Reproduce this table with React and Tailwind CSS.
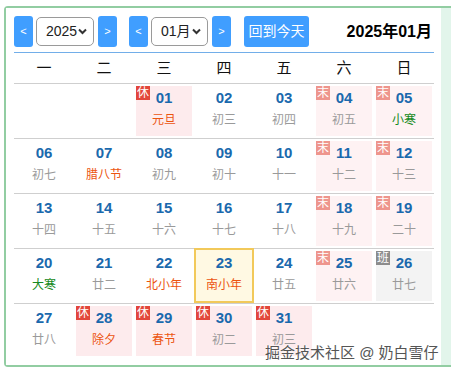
import React from "react";

const FONT = { fontFamily: '"Liberation Sans", Arial, "Noto Sans CJK SC", sans-serif' };

const weeks = [
  [null, null,
    { d: "01", l: "元旦", t: "f", b: "休" },
    { d: "02", l: "初三" },
    { d: "03", l: "初四" },
    { d: "04", l: "初五", b: "末" },
    { d: "05", l: "小寒", t: "s", b: "末" }],
  [{ d: "06", l: "初七" },
    { d: "07", l: "腊八节", t: "f" },
    { d: "08", l: "初九" },
    { d: "09", l: "初十" },
    { d: "10", l: "十一" },
    { d: "11", l: "十二", b: "末" },
    { d: "12", l: "十三", b: "末" }],
  [{ d: "13", l: "十四" },
    { d: "14", l: "十五" },
    { d: "15", l: "十六" },
    { d: "16", l: "十七" },
    { d: "17", l: "十八" },
    { d: "18", l: "十九", b: "末" },
    { d: "19", l: "二十", b: "末" }],
  [{ d: "20", l: "大寒", t: "s" },
    { d: "21", l: "廿二" },
    { d: "22", l: "北小年", t: "f" },
    { d: "23", l: "南小年", t: "f", today: true },
    { d: "24", l: "廿五" },
    { d: "25", l: "廿六", b: "末" },
    { d: "26", l: "廿七", b: "班" }],
  [{ d: "27", l: "廿八" },
    { d: "28", l: "除夕", t: "f", b: "休" },
    { d: "29", l: "春节", t: "f", b: "休" },
    { d: "30", l: "初二", b: "休" },
    { d: "31", l: "初三", b: "休" },
    null, null],
];

function Chevron() {
  return (
    <svg width="9" height="7" viewBox="0 0 9 7">
      <path d="M1 1.5 L4.5 5 L8 1.5" fill="none" stroke="#333" strokeWidth="2" />
    </svg>
  );
}

function NavBtn({ children }) {
  return (
    <div className="w-[19px] h-[31px] rounded-[3px] bg-[#409eff] text-white text-[11px] flex items-center justify-center">
      {children}
    </div>
  );
}

function Select({ value, w }) {
  return (
    <div className={`${w} h-[29px] border border-[#9a9a9a] rounded-[5px] bg-white flex items-center justify-between pl-[9px] pr-[6px] text-[14px] text-[#222]`}>
      <span>{value}</span>
      <Chevron />
    </div>
  );
}

function Badge({ b }) {
  const bg = b === "休" ? "bg-[#e2463b]" : b === "末" ? "bg-[#ee958d]" : "bg-[#8c8c8c]";
  return (
    <div className={`absolute top-0 left-0 w-[14px] h-[14px] ${bg} text-white text-[12px] leading-[14px] flex items-center justify-center`}>
      {b}
    </div>
  );
}

function Cell({ c }) {
  if (!c) return <div className="m-[2px]" />;
  let bg = "bg-transparent";
  if (c.b === "休") bg = "bg-[#fdebed]";
  else if (c.b === "末") bg = "bg-[#fef2f3]";
  else if (c.b === "班") bg = "bg-[#f3f3f3]";
  const lc = c.t === "f" ? "text-[#ec5410]" : c.t === "s" ? "text-[#178a22]" : "text-[#9a9a9a]";
  if (c.today) {
    return (
      <div className="relative -mt-px h-[55px] border-2 border-[#f2c95a] bg-[#fff9e3] flex flex-col items-center pt-[4px]">
        <div className="text-[15px] leading-[18px] font-bold text-[#1a69ad]">{c.d}</div>
        <div className={`mt-[5px] text-[12px] leading-[16px] ${lc}`}>{c.l}</div>
      </div>
    );
  }
  return (
    <div className={`relative m-[2px] ${bg} flex flex-col items-center pt-[3px]`}>
      {c.b && <Badge b={c.b} />}
      <div className="text-[15px] leading-[18px] font-bold text-[#1a69ad]">{c.d}</div>
      <div className={`mt-[5px] text-[12px] leading-[16px] ${lc}`}>{c.l}</div>
    </div>
  );
}

export default function App() {
  return (
    <div className="relative w-[451px] h-[375px] overflow-hidden bg-white" style={FONT}>
      <div className="ml-[4px] mt-[6px] w-[470px] h-[361px] border-2 border-[#92cda2] rounded-[4px] bg-[#e2f5eb]">
        <div className="w-[435px] h-full bg-white pl-[8px] pt-[8px]">
          <div className="w-[420px] pb-[5px] border-b border-[#72aee9]">
            <div className="flex items-center h-[31px]">
              <NavBtn>&lt;</NavBtn>
              <div className="ml-[3px]"><Select value="2025" w="w-[58px]" /></div>
              <div className="ml-[4px]"><NavBtn>&gt;</NavBtn></div>
              <div className="ml-[12px]"><NavBtn>&lt;</NavBtn></div>
              <div className="ml-[3px]"><Select value="01月" w="w-[57px]" /></div>
              <div className="ml-[4px]"><NavBtn>&gt;</NavBtn></div>
              <div className="ml-[13px] h-[31px] w-[65px] rounded-[3px] bg-[#409eff] text-white text-[14px] flex items-center justify-center">
                回到今天
              </div>
              <div className="ml-auto mr-[2px] text-[16px] font-bold text-black">2025年01月</div>
            </div>
          </div>
          <div className="w-[420px] grid grid-cols-7 h-[30px] items-center text-[15px] text-[#111]">
            {["一", "二", "三", "四", "五", "六", "日"].map((w) => (
              <div key={w} className="text-center">{w}</div>
            ))}
          </div>
          {weeks.map((wk, i) => (
            <div key={i} className="w-[420px] grid grid-cols-7 h-[55px] border-t border-[#cfcfcf]">
              {wk.map((c, j) => (
                <Cell key={j} c={c} />
              ))}
            </div>
          ))}
        </div>
      </div>
      <div className="absolute left-[265px] top-[344px] text-[15px] leading-[18px] text-[#555] [text-shadow:0_0_2px_#fff,0_0_2px_#fff]">
        掘金技术社区 @ 奶白雪仔
      </div>
    </div>
  );
}
